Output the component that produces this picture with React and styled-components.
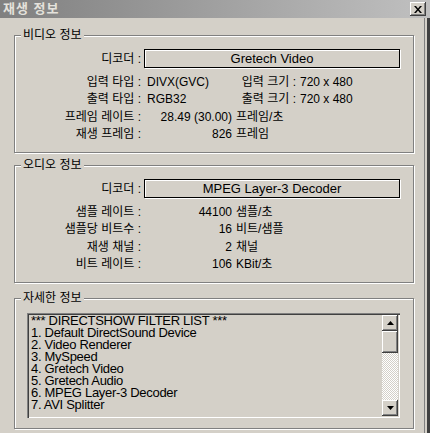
import React from 'react'
import styled, { createGlobalStyle } from 'styled-components'

const GlobalStyle = createGlobalStyle`
  html, body {
    margin: 0;
    padding: 0;
    background: #d4d0c8;
    overflow: hidden;
  }
  body {
    font-family: "Liberation Sans", "Noto Sans CJK KR", sans-serif;
    font-size: 12px;
    color: #000;
  }
`

const raised = `
  background: #d4d0c8;
  box-shadow: inset -1px -1px #404040, inset 1px 1px #fff,
    inset -2px -2px #808080, inset 2px 2px #d4d0c8;
`

const Window = styled.div`
  width: 430px;
  height: 433px;
  display: flex;
  flex-direction: column;
  background: #d4d0c8;
`

const TitleBar = styled.div`
  height: 18px;
  flex: none;
  display: flex;
  align-items: center;
  justify-content: space-between;
  padding: 0 4px 0 3px;
  background: linear-gradient(to right, #808080, #c0c0c0);
`

const Title = styled.span`
  color: #e4e2dc;
  font-weight: bold;
  font-size: 13px;
  line-height: 16px;
  letter-spacing: 1px;
`

const CloseButton = styled.button`
  width: 16px;
  height: 14px;
  padding: 0;
  border: none;
  display: flex;
  align-items: center;
  justify-content: center;
  ${raised}
`

const Body = styled.div`
  flex: 1;
  display: flex;
`

const Content = styled.div`
  flex: 1;
  padding: 17px 10px 0 14px;
  display: flex;
  flex-direction: column;
`

const RightEdge = styled.div`
  width: 6px;
  flex: none;
  box-sizing: border-box;
  border-left: 1px solid #808080;
  border-right: 3px solid #404040;
  background: #d4d0c8;
`

const Group = styled.div`
  position: relative;
  box-sizing: border-box;
  height: ${p => p.$height}px;
  margin-top: ${p => p.$gap || 0}px;
  border: 1px solid #808080;
  box-shadow: 1px 1px 0 #fff, inset 1px 1px 0 #fff;
  padding: ${p => p.$pad || '13px 13px 0 0'};
`

const GroupTitle = styled.span`
  position: absolute;
  top: -8px;
  left: 6px;
  padding: 0 2px;
  background: #d4d0c8;
  line-height: 14px;
  font-size: 12px;
`

const Row = styled.div`
  display: flex;
  align-items: center;
  height: ${p => p.$h || 17.5}px;
  line-height: 14px;
  white-space: pre;
`

const Label = styled.span`
  width: ${p => p.$w || 126}px;
  flex: none;
  text-align: right;
`

const Value = styled.span`
  width: ${p => p.$w ? p.$w + 'px' : 'auto'};
  margin-left: ${p => p.$ml || 0}px;
  text-align: ${p => p.$align || 'left'};
  flex: none;
`

const DecoderBox = styled.div`
  flex: 1;
  margin-left: 3px;
  height: 19px;
  box-sizing: border-box;
  border: 1px solid #000;
  box-shadow: 1px 1px 0 #fff, inset 1px 1px 0 #fff;
  display: flex;
  align-items: center;
  justify-content: center;
  font-size: 13px;
`

const Rows = styled.div`
  margin-top: 5px;
`

const ListBox = styled.div`
  height: 105px;
  box-sizing: border-box;
  padding: 2px;
  display: flex;
  box-shadow: inset 1px 1px #808080, inset 2px 2px #404040,
    inset -1px -1px #fff, inset -2px -2px #d4d0c8;
`

const ListText = styled.div`
  flex: 1;
  padding: 0 2px;
  font-size: 13px;
  line-height: 12px;
  letter-spacing: -0.3px;
  white-space: pre;
`

const ScrollBar = styled.div`
  width: 16px;
  display: flex;
  flex-direction: column;
`

const ScrollButton = styled.div`
  height: ${p => p.$h || 16}px;
  flex: none;
  display: flex;
  align-items: center;
  justify-content: center;
  ${raised}
`

const Track = styled.div`
  flex: 1;
  background: repeating-conic-gradient(#d4d0c8 0 25%, #fff 0 50%) 0 0 / 2px 2px;
`

const Arrow = ({ down }) => (
  <svg width="7" height="4" viewBox="0 0 7 4">
    <path d={down ? 'M0 0h7L3.5 4z' : 'M0 4h7L3.5 0z'} fill="#000" />
  </svg>
)

const videoIO = [
  ['입력 타입', 'DIVX(GVC)', '입력 크기', '720 x 480'],
  ['출력 타입', 'RGB32', '출력 크기', '720 x 480'],
]

const videoStats = [
  ['프레임 레이트', '28.49 (30.00)', '프레임/초'],
  ['재생 프레임', '826', '프레임'],
]

const audioStats = [
  ['샘플 레이트', '44100', '샘플/초'],
  ['샘플당 비트수', '16', '비트/샘플'],
  ['재생 채널', '2', '채널'],
  ['비트 레이트', '106', 'KBit/초'],
]

const filters = [
  '*** DIRECTSHOW FILTER LIST ***',
  '1. Default DirectSound Device',
  '2. Video Renderer',
  '3. MySpeed',
  '4. Gretech Video',
  '5. Gretech Audio',
  '6. MPEG Layer-3 Decoder',
  '7. AVI Splitter',
]

const StatRow = ({ label, value, unit }) => (
  <Row>
    <Label>{label} :</Label>
    <Value $w={91} $align="right">{value}</Value>
    <Value $ml={4}>{unit}</Value>
  </Row>
)

const DecoderRow = ({ name }) => (
  <Row $h={19}>
    <Label>디코더 :</Label>
    <DecoderBox>{name}</DecoderBox>
  </Row>
)

export default function App() {
  return (
    <Window>
      <GlobalStyle />
      <TitleBar>
        <Title>재생 정보</Title>
        <CloseButton>
          <svg width="8" height="7" viewBox="0 0 8 7">
            <path d="M0 0h2l2 2.5L6 0h2L5 3.5 8 7H6L4 4.5 2 7H0l3-3.5z" fill="#000" />
          </svg>
        </CloseButton>
      </TitleBar>
      <Body>
        <Content>
          <Group $height={118}>
            <GroupTitle>비디오 정보</GroupTitle>
            <DecoderRow name="Gretech Video" />
            <Rows>
              {videoIO.map(([l1, v1, l2, v2]) => (
                <Row key={l1}>
                  <Label>{l1} :</Label>
                  <Value $w={80} $ml={6}>{v1}</Value>
                  <Label $w={69}>{l2} :</Label>
                  <Value $ml={4}>{v2}</Value>
                </Row>
              ))}
              {videoStats.map(([l, v, u]) => (
                <StatRow key={l} label={l} value={v} unit={u} />
              ))}
            </Rows>
          </Group>
          <Group $height={118} $gap={12}>
            <GroupTitle>오디오 정보</GroupTitle>
            <DecoderRow name="MPEG Layer-3 Decoder" />
            <Rows>
              {audioStats.map(([l, v, u]) => (
                <StatRow key={l} label={l} value={v} unit={u} />
              ))}
            </Rows>
          </Group>
          <Group $height={131} $gap={15} $pad="14px 13px 0 12px">
            <GroupTitle>자세한 정보</GroupTitle>
            <ListBox>
              <ListText>{filters.join('\n')}</ListText>
              <ScrollBar>
                <ScrollButton><Arrow /></ScrollButton>
                <ScrollButton $h={22} />
                <Track />
                <ScrollButton><Arrow down /></ScrollButton>
              </ScrollBar>
            </ListBox>
          </Group>
        </Content>
        <RightEdge />
      </Body>
    </Window>
  )
}
